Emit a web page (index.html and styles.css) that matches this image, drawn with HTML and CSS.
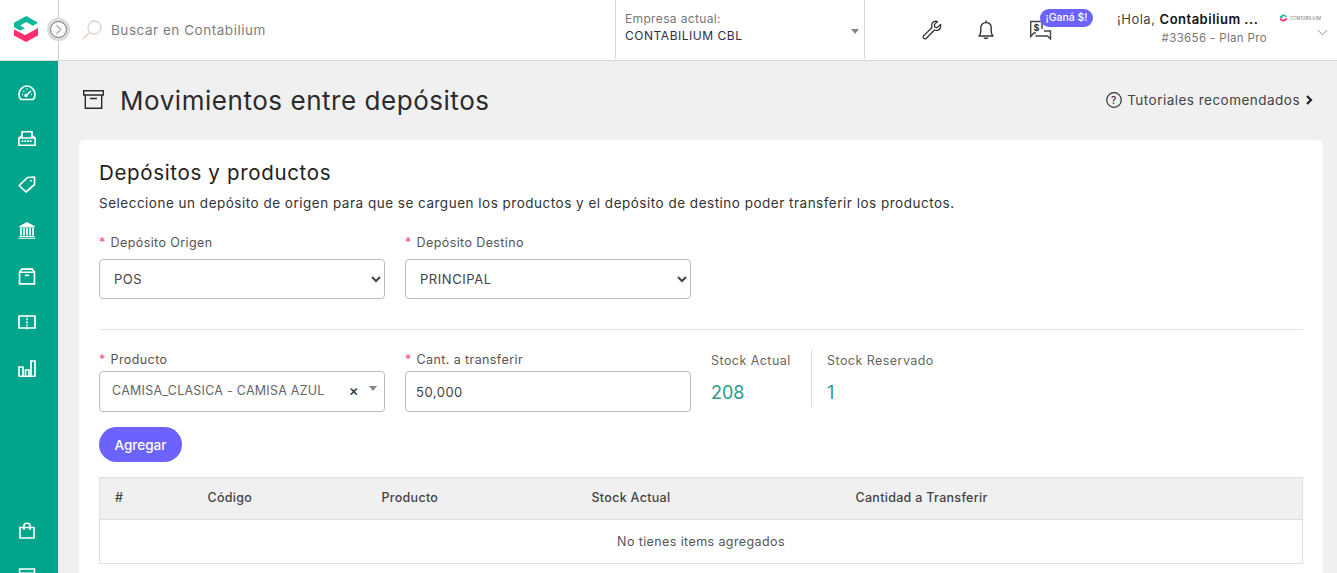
FILE: index.html
```html
<!DOCTYPE html>
<html lang="es">
<head>
<meta charset="utf-8">
<title>Movimientos entre depósitos</title>
<link rel="stylesheet" href="styles.css">
</head>
<body>
<header class="topbar">
  <div class="brand">
    <svg class="logo" viewBox="0 0 24 26"><path fill="#0fb79c" d="M0 6.700 12.300 0 24 6.700 19 9.800 12.300 6 6.200 9.400 11 12.400 6 14.500 0 11z"/><path fill="#ff2e6e" d="M0 13.300 11 19.200 24 12v7.500L12 26 0 19.500z"/></svg>
    <button class="toggle" type="button" aria-label="Expandir"><svg viewBox="0 0 16 16"><path d="M6 3.500 10.500 8 6 12.500" fill="none" stroke="#666" stroke-width="1"/></svg></button>
  </div>
  <div class="search">
    <svg class="search-icon" viewBox="0 0 20 20"><circle cx="12.500" cy="7.500" r="6.500" fill="none" stroke="#d4d4d4" stroke-width="1.300"/><path d="M7.800 12.200 1 19" stroke="#e3d3c5" stroke-width="1.600"/></svg>
    <span>Buscar en Contabilium</span>
  </div>
  <div class="company">
    <div class="company-label">Empresa actual:</div>
    <div class="company-name">CONTABILIUM CBL</div>
    <span class="caret company-caret"></span>
  </div>
  <div class="actions">
    <svg class="action wrench" viewBox="0 0 20 20"><path d="M18.500 4.500 15.300 7.600 12.800 7.100 12.300 4.600 15.500 1.500C13 .7 10.300 1.800 9.700 4.300 9.400 5.400 9.600 6.500 10 7.500L1.800 15.600C.8 16.600 1 17.700 1.700 18.400 2.400 19.100 3.500 19.200 4.400 18.200L12.500 10C13.500 10.400 14.600 10.600 15.700 10.300 18.200 9.700 19.300 7 18.500 4.500Z" fill="none" stroke="#333" stroke-width="1.300" stroke-linejoin="round"/></svg>
    <svg class="action bell" viewBox="0 0 16 20"><path d="M1 16c1.300-1.300 1.800-2.600 1.800-5V7.800C2.800 4.600 5 2.600 8 2.600s5.200 2 5.200 5.200V11c0 2.400.5 3.700 1.800 5Z" fill="none" stroke="#333" stroke-width="1.400" stroke-linejoin="round"/><path d="M8 .5v2M6 17.500c.4 1.300 3.600 1.300 4 0" fill="none" stroke="#333" stroke-width="1.400"/></svg>
    <div class="chat">
      <svg class="action" viewBox="0 0 23 20"><path d="M13 9V1.500H1.700V16.500L5 13H7" fill="none" stroke="#444" stroke-width="1.400"/><path d="M15 11H21.500V19L18.500 16H6.500" fill="none" stroke="#444" stroke-width="1.400"/><text x="4.500" y="11" class="dollar">$</text></svg>
      <span class="badge">¡Ganá $!</span>
    </div>
  </div>
  <div class="user">
    <div class="user-text">
      <div class="hello">¡Hola, <strong>Contabilium ...</strong></div>
      <div class="plan">#33656 - Plan Pro</div>
    </div>
    <div class="user-side">
      <div class="mini-brand">
        <svg class="mini-logo" viewBox="0 0 24 26"><path fill="#0fb79c" d="M0 6.700 12.300 0 24 6.700 19 9.800 12.300 6 6.200 9.400 11 12.400 6 14.500 0 11z"/><path fill="#ff2e6e" d="M0 13.300 11 19.200 24 12v7.500L12 26 0 19.500z"/></svg>
        <span>CONTABILIUM</span>
      </div>
      <svg class="user-chevron" viewBox="0 0 12 7"><path d="M1 1l5 5 5-5" fill="none" stroke="#a9805f" stroke-width="1"/></svg>
    </div>
  </div>
</header>

<div class="layout">
  <nav class="sidebar">
    <a class="nav-item"><svg viewBox="0 0 18 16"><path d="M3 15C1.500 13.500 1 11.800 1 10c0-4.500 3.500-8.500 8-8.500s8 4 8 8.500c0 1.800-.5 3.500-2 5Z" fill="none" stroke="#fff" stroke-width="1.700"/><path d="M7.500 11.500 13 6.500M4 10h1M9 5V4M5.500 6.500l.7.700M14 10h-1" stroke="#fff" stroke-width="1.500" fill="none"/><circle cx="8" cy="11" r="1.700" fill="#fff"/></svg></a>
    <a class="nav-item"><svg viewBox="0 0 20 17"><path d="M4.500 8V1h11v7M1 8h18v8H1zM1 8l3.500-3M19 8l-3.500-3" fill="none" stroke="#fff" stroke-width="1.800"/><path d="M4 11.500h12" stroke="#fff" stroke-width="2" stroke-dasharray="2 1" fill="none"/></svg></a>
    <a class="nav-item"><svg viewBox="0 0 18 17"><path d="M1.200 9.500 9.500 1.500 16.500 1 16.500 8.500 8 16Z" fill="none" stroke="#fff" stroke-width="1.700" stroke-linejoin="round"/><circle cx="13" cy="4.800" r="1" fill="#fff"/></svg></a>
    <a class="nav-item"><svg viewBox="0 0 18 17"><path d="M9 .8 16.500 4.800H1.500Z" fill="#fff" stroke="#fff" stroke-width="1.300"/><path d="M3 6v7.500M6 6v7.500M9 6v7.500M12 6v7.500M15 6v7.500" stroke="#fff" stroke-width="1.700"/><path d="M1.500 14.500h15M.5 16.300h17" stroke="#fff" stroke-width="1.100"/></svg></a>
    <a class="nav-item"><svg viewBox="0 0 16 16"><path d="M1 4V15H15V4L13 1H3ZM1 4H15M6 7H10" fill="none" stroke="#fff" stroke-width="1.600"/></svg></a>
    <a class="nav-item"><svg viewBox="0 0 18 16"><path d="M9 1.500H1V13.500H17V1.500H9" fill="none" stroke="#fff" stroke-width="1.700"/><path d="M9 1V16" stroke="#fff" stroke-width="1.700" stroke-dasharray="1.800 1.200"/></svg></a>
    <a class="nav-item"><svg viewBox="0 0 18 17"><path d="M1 16V7h4v9M7.500 16v-6h3.500v6M13 16V1h4v15M.5 16.300h17" fill="none" stroke="#fff" stroke-width="1.700"/></svg></a>
    <a class="nav-item nav-bag"><svg viewBox="0 0 16 17"><path d="M1 5.500H15V16H1ZM5 8V3.500C5 .5 11 .5 11 3.500V8" fill="none" stroke="#fff" stroke-width="1.600"/></svg></a>
    <a class="nav-item"><svg viewBox="0 0 16 16"><path d="M1 1H15V15H1ZM1 5H15" fill="none" stroke="#fff" stroke-width="1.500"/></svg></a>
  </nav>

  <main class="content">
    <div class="page-head">
      <h1 class="page-title">
        <svg class="archive" viewBox="0 0 21 19"><path d="M.7.700H20.300V5H.7ZM2.300 5V18.300H18.700V5M7 8.500H14" fill="none" stroke="#2b2b2b" stroke-width="1.400"/></svg>
        Movimientos entre depósitos
      </h1>
      <a class="tutorials">
        <svg class="help" viewBox="0 0 16 16"><circle cx="8" cy="8" r="7.300" fill="none" stroke="#333" stroke-width="1.200"/><text x="8" y="11.500" text-anchor="middle" class="help-mark">?</text></svg>
        <span>Tutoriales recomendados</span>
        <svg class="tut-chevron" viewBox="0 0 7 10"><path d="M1 1l4 4-4 4" fill="none" stroke="#222" stroke-width="2.200"/></svg>
      </a>
    </div>

    <section class="card">
      <h2 class="card-title">Depósitos y productos</h2>
      <p class="card-desc">Seleccione un depósito de origen para que se carguen los productos y el depósito de destino poder transferir los productos.</p>

      <div class="form-row form-row-origin">
        <div class="field">
          <label class="label"><span class="req">*</span> Depósito Origen</label>
          <select class="select"><option>POS</option></select>
        </div>
        <div class="field">
          <label class="label"><span class="req">*</span> Depósito Destino</label>
          <select class="select"><option>PRINCIPAL</option></select>
        </div>
      </div>

      <hr class="divider">

      <div class="form-row form-row-product">
        <div class="field">
          <label class="label"><span class="req">*</span> Producto</label>
          <div class="combo">
            <span class="combo-value">CAMISA_CLASICA - CAMISA AZUL</span>
            <span class="combo-clear">×</span>
            <span class="caret combo-caret"></span>
          </div>
        </div>
        <div class="field">
          <label class="label"><span class="req">*</span> Cant. a transferir</label>
          <input class="input" type="text" value="50,000">
        </div>
        <div class="stats">
          <div class="stat stat-first">
            <div class="stat-label">Stock Actual</div>
            <div class="stat-value">208</div>
          </div>
          <div class="stat stat-second">
            <div class="stat-label">Stock Reservado</div>
            <div class="stat-value">1</div>
          </div>
        </div>
      </div>

      <button class="btn" type="button">Agregar</button>

      <table class="table">
        <thead>
          <tr>
            <th class="col-num">#</th>
            <th class="col-code">Código</th>
            <th class="col-prod">Producto</th>
            <th class="col-stock">Stock Actual</th>
            <th>Cantidad a Transferir</th>
          </tr>
        </thead>
        <tbody>
          <tr><td colspan="5">No tienes items agregados</td></tr>
        </tbody>
      </table>
    </section>
  </main>
</div>
</body>
</html>
```

FILE: styles.css
```css
* { box-sizing: border-box; }
html, body { height: 573px; overflow: hidden; }
body {
  margin: 0;
  background: #f0f0f0;
  color: #333;
  font-family: "Inter", "Noto Sans", sans-serif;
  font-size: 13px;
}
.topbar {
  display: flex;
  height: 61px;
  background: #fff;
  border-bottom: 1px solid #d9d9d9;
}
.brand {
  position: relative;
  width: 59px;
  flex: none;
  padding: 16px 0 0 14px;
  border-right: 1px solid #cfcfcf;
}
.logo { display: block; width: 24px; height: 26px; }
.toggle {
  position: absolute;
  left: 47px;
  top: 18px;
  width: 23px;
  height: 23px;
  padding: 3px;
  border: 0;
  border-radius: 50%;
  background: #dcdcdc;
}
.toggle svg {
  display: block;
  width: 17px;
  height: 17px;
  background: #f8f8f8;
  border: 1px solid #777;
  border-radius: 50%;
}
.search {
  flex: 1;
  display: flex;
  align-items: center;
  gap: 9px;
  padding-left: 23px;
  color: #7d7d7d;
  font-size: 13.500px;
  letter-spacing: .53px;
}
.search-icon { width: 20px; height: 20px; }
.company {
  position: relative;
  width: 250px;
  flex: none;
  height: 59px;
  padding: 10px 0 0 9px;
  border-left: 1px solid #d9d9d9;
  border-right: 1px solid #d9d9d9;
  font-size: 12px;
  line-height: 17px;
}
.company-label { color: #777; letter-spacing: .35px; }
.company-name { color: #2e2e4a; letter-spacing: .53px; }
.caret {
  position: absolute;
  width: 0;
  height: 0;
  border-left: 4px solid transparent;
  border-right: 4px solid transparent;
  border-top: 5px solid #888;
}
.company-caret { right: 5px; top: 29px; }
.actions {
  position: relative;
  width: 252px;
  flex: none;
  display: flex;
  align-items: center;
  padding-left: 57px;
}
.action { display: block; }
.wrench { width: 20px; height: 20px; margin-right: 36px; }
.bell { width: 16px; height: 20px; margin-right: 35px; }
.chat { width: 23px; height: 20px; }
.chat .action { width: 23px; height: 20px; }
.dollar { font: 700 9px "Inter", sans-serif; fill: #333; }
.badge {
  position: absolute;
  left: 175px;
  top: 9px;
  width: 53px;
  height: 18px;
  border-radius: 9px;
  background: #6c63ff;
  color: #fff;
  font-size: 10.500px;
  font-weight: 500;
  line-height: 17px;
  text-align: center;
  white-space: nowrap;
}
.user {
  flex: none;
  width: 220px;
  display: flex;
}
.user-text {
  width: 150px;
  flex: none;
  padding-top: 10px;
  text-align: right;
}
.hello {
  color: #444;
  font-size: 13px;
  line-height: 18px;
  letter-spacing: .5px;
  white-space: nowrap;
  width: 143px;
  text-align: left;
}
.hello strong { color: #111; font-weight: 600; }
.plan { margin-top: 3px; color: #777; font-size: 11.500px; line-height: 15px; letter-spacing: .35px; }
.user-side { flex: none; width: 50px; padding: 13px 0 0 13px; }
.mini-brand {
  display: flex;
  align-items: center;
  gap: 3px;
  height: 10px;
  color: #777;
  font-size: 4.500px;
  white-space: nowrap;
}
.mini-logo { width: 7px; height: 8px; flex: none; }
.user-chevron { display: block; width: 11px; height: 7px; margin: 6px 0 0 37px; }

.layout { display: flex; height: 512px; }
.sidebar {
  flex: none;
  width: 58px;
  height: 512px;
  overflow: hidden;
  background: #00a58b;
  padding: 8px 5px 0 0;
}
.nav-item {
  display: flex;
  justify-content: center;
  align-items: center;
  height: 46px;
}
.nav-item svg { width: 18px; height: 17px; }
.nav-bag { margin-top: 116px; }
.content {
  flex: 1;
  min-width: 0;
  padding: 0 14px 0 20px;
  border-left: 1px solid #e4e4e4;
}
.page-head {
  display: flex;
  justify-content: space-between;
  align-items: center;
  height: 79px;
}
.page-title {
  display: flex;
  align-items: center;
  gap: 16px;
  margin: 0 0 0 4px;
  color: #2b2b2b;
  font-size: 26px;
  font-weight: 400;
  letter-spacing: .54px;
}
.archive { width: 21px; height: 19px; margin-bottom: 2px; }
.tutorials {
  display: flex;
  align-items: center;
  gap: 5px;
  margin: 0 10px 2px 0;
  color: #444;
  font-size: 13.500px;
  letter-spacing: .48px;
}
.help { width: 16px; height: 16px; }
.help-mark { font: 500 10px "Inter", sans-serif; fill: #333; }
.tut-chevron { width: 7px; height: 10px; margin-left: 1px; }
.card {
  height: 480px;
  padding: 20px 20px 0;
  background: #fff;
  border-radius: 5px;
}
.card-title {
  margin: 0;
  color: #222;
  font-size: 20.500px;
  font-weight: 400;
  line-height: 26px;
  letter-spacing: .66px;
}
.card-desc {
  margin: 8px 0 0;
  color: #333;
  font-size: 13.500px;
  line-height: 18px;
  letter-spacing: .5px;
}
.form-row { display: flex; gap: 20px; }
.form-row-origin { margin-top: 23px; }
.field { width: 286px; flex: none; }
.label {
  display: block;
  height: 24px;
  color: #555;
  font-size: 12.500px;
  line-height: 16px;
  letter-spacing: .4px;
}
.form-row-product .label { height: 19px; }
.req { color: #f5487f; margin-right: 1px; }
.select, .input, .combo {
  display: block;
  width: 100%;
  border: 1px solid #bdbdbd;
  border-radius: 4px;
  background: #fff;
  color: #444;
  font-family: inherit;
  font-size: 13px;
}
.select { height: 40px; padding-left: 10px; letter-spacing: .55px; }
.divider { margin: 30px 0 22px; border: 0; border-top: 1px solid #e4e4e4; }
.combo {
  position: relative;
  height: 41px;
  padding-left: 12px;
  line-height: 37px;
  color: #666;
  font-size: 12.500px;
  letter-spacing: .25px;
}
.combo-clear { position: absolute; right: 25px; top: 0; color: #333; font-size: 15px; font-weight: 500; }
.combo-caret { right: 7px; top: 14px; }
.input { height: 41px; padding: 0 10px; outline: 0; letter-spacing: .5px; }
.stats { display: flex; height: 48px; padding-top: 1px; }
.stat-label { color: #666; font-size: 12.500px; line-height: 16px; letter-spacing: .45px; margin-bottom: 14px; }
.stat-value { color: #2c9a8e; font-size: 18px; line-height: 20px; }
.stat-first { width: 100px; }
.stat-second { padding-left: 15px; border-left: 1px solid #ddd; height: 57px; margin-top: -3px; padding-top: 3px; }
.btn {
  display: block;
  width: 83px;
  height: 35px;
  margin-top: 15px;
  padding: 0;
  border: 0;
  border-radius: 18px;
  background: #6c63ff;
  color: #fff;
  font-family: inherit;
  font-size: 13.500px;
  font-weight: 500;
}
.table {
  width: 100%;
  margin-top: 15px;
  border-collapse: collapse;
  table-layout: fixed;
  font-size: 12.500px;
  letter-spacing: .3px;
}
.table th, .table td { border: 1px solid #dcdfe3; }
.table th {
  height: 42px;
  padding: 0 0 2px 15px;
  background: #f0f0f0;
  border-left: 0;
  border-right: 0;
  color: #444;
  font-weight: 500;
  text-align: left;
}
.table th:first-child { border-left: 1px solid #dcdfe3; }
.table th:last-child { border-right: 1px solid #dcdfe3; }
.col-num { width: 93px; }
.col-code { width: 174px; }
.col-prod { width: 210px; }
.col-stock { width: 264px; }
.table td { height: 44px; padding-bottom: 2px; text-align: center; color: #555; background: #fff; letter-spacing: .4px; }
```
